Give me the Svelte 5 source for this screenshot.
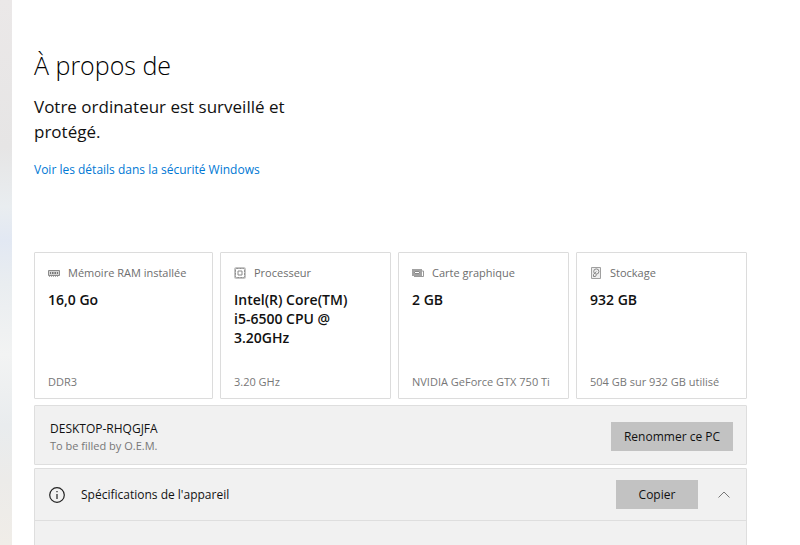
<script>
  let open = $state(true);
  const cards = [
    { icon: 'ram', label: 'Mémoire RAM installée', value: '16,0 Go', detail: 'DDR3' },
    { icon: 'cpu', label: 'Processeur', value: 'Intel(R) Core(TM) i5-6500 CPU @ 3.20GHz', detail: '3.20 GHz' },
    { icon: 'gpu', label: 'Carte graphique', value: '2 GB', detail: 'NVIDIA GeForce GTX 750 Ti' },
    { icon: 'disk', label: 'Stockage', value: '932 GB', detail: '504 GB sur 932 GB utilisé' }
  ];
</script>

<div class="page">
  <div class="edge"></div>
  <main>
    <h1>À propos de</h1>
    <p class="status">Votre ordinateur est surveillé et protégé.</p>
    <a href="#securite">Voir les détails dans la sécurité Windows</a>

    <section class="cards">
      {#each cards as card}
        <article>
          <div class="label">
            <svg width="12" height="12" viewBox="0 0 12 12" fill="none" stroke="#8a8a8a" aria-hidden="true">
              {#if card.icon === 'ram'}
                <path d="M.5 3.500h11v5H.5z" fill="#d4d4d4" />
                <path d="M2.500 5v2M4.500 5v2M6 5v2M7.500 5v2M9.500 5v2" stroke="#777" />
                <path d="M1 9.500h10" stroke="#aaa" stroke-dasharray="1 1" />
              {:else if card.icon === 'cpu'}
                <rect x="1" y="1" width="10" height="10" rx="1.500" stroke="#c4c4c4" stroke-width="2" />
                <rect x="1.500" y="1.500" width="9" height="9" rx="1" stroke="#8f8f8f" stroke-dasharray="2 1" />
                <path d="M4 4h4v4H4z" stroke="#8a8a8a" />
              {:else if card.icon === 'gpu'}
                <path d="M1 3h8v5H1z" stroke="#a2a2a2" stroke-width="2" />
                <path d="M2.500 4.500h5v2h-5z" fill="#fff" stroke="#888" />
                <path d="M2 9.500h9.500V4H10" stroke="#999" />
              {:else}
                <path d="M1.500 .5h9v11h-9z" fill="#eee" stroke="#a0a0a0" />
                <circle cx="6.300" cy="4.500" r="2.600" stroke="#888" />
                <path d="M6.300 4.500L3.500 7.500v2h2l1-2" stroke="#888" />
              {/if}
            </svg>
            <span>{card.label}</span>
          </div>
          <strong>{card.value}</strong>
          <small>{card.detail}</small>
        </article>
      {/each}
    </section>

    <section class="panel device">
      <div class="names">
        <span class="name">DESKTOP-RHQGJFA</span>
        <span class="maker">To be filled by O.E.M.</span>
      </div>
      <button class="action">Renommer ce PC</button>
    </section>

    <section class="panel specs">
      <header>
        <svg width="16" height="16" viewBox="0 0 16 16" fill="none" stroke="#222" aria-hidden="true">
          <circle cx="8" cy="8" r="7.300" stroke-width="1.200" />
          <path d="M8 7v5M8 4v1.300" stroke-width="1.200" />
        </svg>
        <h2>Spécifications de l'appareil</h2>
        <button class="action copy">Copier</button>
        <button class="toggle" aria-label="Réduire" aria-expanded={open} onclick={() => (open = !open)}>
          <svg width="14" height="8" viewBox="0 0 14 8" fill="none" stroke="#777" aria-hidden="true">
            <path d="M1.500 6.500L7 1l5.500 5.500" />
          </svg>
        </button>
      </header>
      {#if open}<div class="body"></div>{/if}
    </section>
  </main>
</div>

<style>
  :global(body) { margin: 0; background: #fff; }
  .page {
    display: flex;
    height: 100vh;
    overflow: hidden;
    font-family: "Open Sans", "Noto Sans", sans-serif;
    font-size: 12px;
    color: #111;
  }
  .edge {
    flex: 0 0 12px;
    background: linear-gradient(#ebe8e8 0%, #e6e5e5 27%, #e9edf0 38%, #e2e8f3 44%, #e9edf0 52%, #f2f3f3 65%, #e9ecee 78%, #ecebe9 88%, #f0ede8 100%);
  }
  main {
    flex: 1;
    display: flex;
    flex-direction: column;
    min-width: 0;
    padding: 47px 53px 0 22px;
  }
  h1 { margin: 0; font-size: 25px; line-height: 36px; font-weight: 300; color: #000; }
  .status { margin: 11px 0 0; max-width: 270px; font-size: 17px; line-height: 25px; }
  a { align-self: flex-start; margin-top: 16px; line-height: 20px; color: #0078d4; text-decoration: none; }
  .cards {
    display: grid;
    grid-template-columns: 179fr 171fr 171fr 171fr;
    gap: 7px;
    margin-top: 72px;
  }
  article {
    box-sizing: border-box;
    display: flex;
    flex-direction: column;
    min-width: 0;
    min-height: 147px;
    padding: 11px 13px 7px;
    border: 1px solid #dcdcdc;
    border-radius: 1px;
  }
  .label { display: flex; align-items: center; gap: 8px; line-height: 18px; font-size: 11px; color: #6e6e6e; }
  .label svg { flex: none; }
  strong { margin-top: 8px; max-width: 124px; font-size: 14px; line-height: 19px; font-weight: 600; }
  small { margin-top: auto; font-size: 11px; line-height: 18px; color: #777; white-space: nowrap; }
  .panel { flex: none; border: 1px solid #dedede; border-radius: 1px; background: #f1f1f1; }
  .device { display: flex; align-items: center; margin-top: 6px; padding: 14px 13px 11px 15px; }
  .names { flex: 1; display: flex; flex-direction: column; }
  .name { line-height: 18px; }
  .maker { font-size: 11px; line-height: 15px; color: #777; }
  button { font: inherit; color: #111; border: 0; padding: 0; }
  .action { width: 122px; height: 29px; background: #c2c2c2; }
  .copy { width: 82px; }
  .specs { margin-top: 3px; }
  header { display: flex; align-items: center; height: 51px; padding: 0 15px 0 14px; border-bottom: 1px solid #dedede; }
  h2 { flex: 1; margin: 0 0 0 16px; font-size: 12px; line-height: 18px; font-weight: 400; }
  .toggle { display: flex; margin-left: 19px; background: none; }
  .body { height: 120px; }
</style>
